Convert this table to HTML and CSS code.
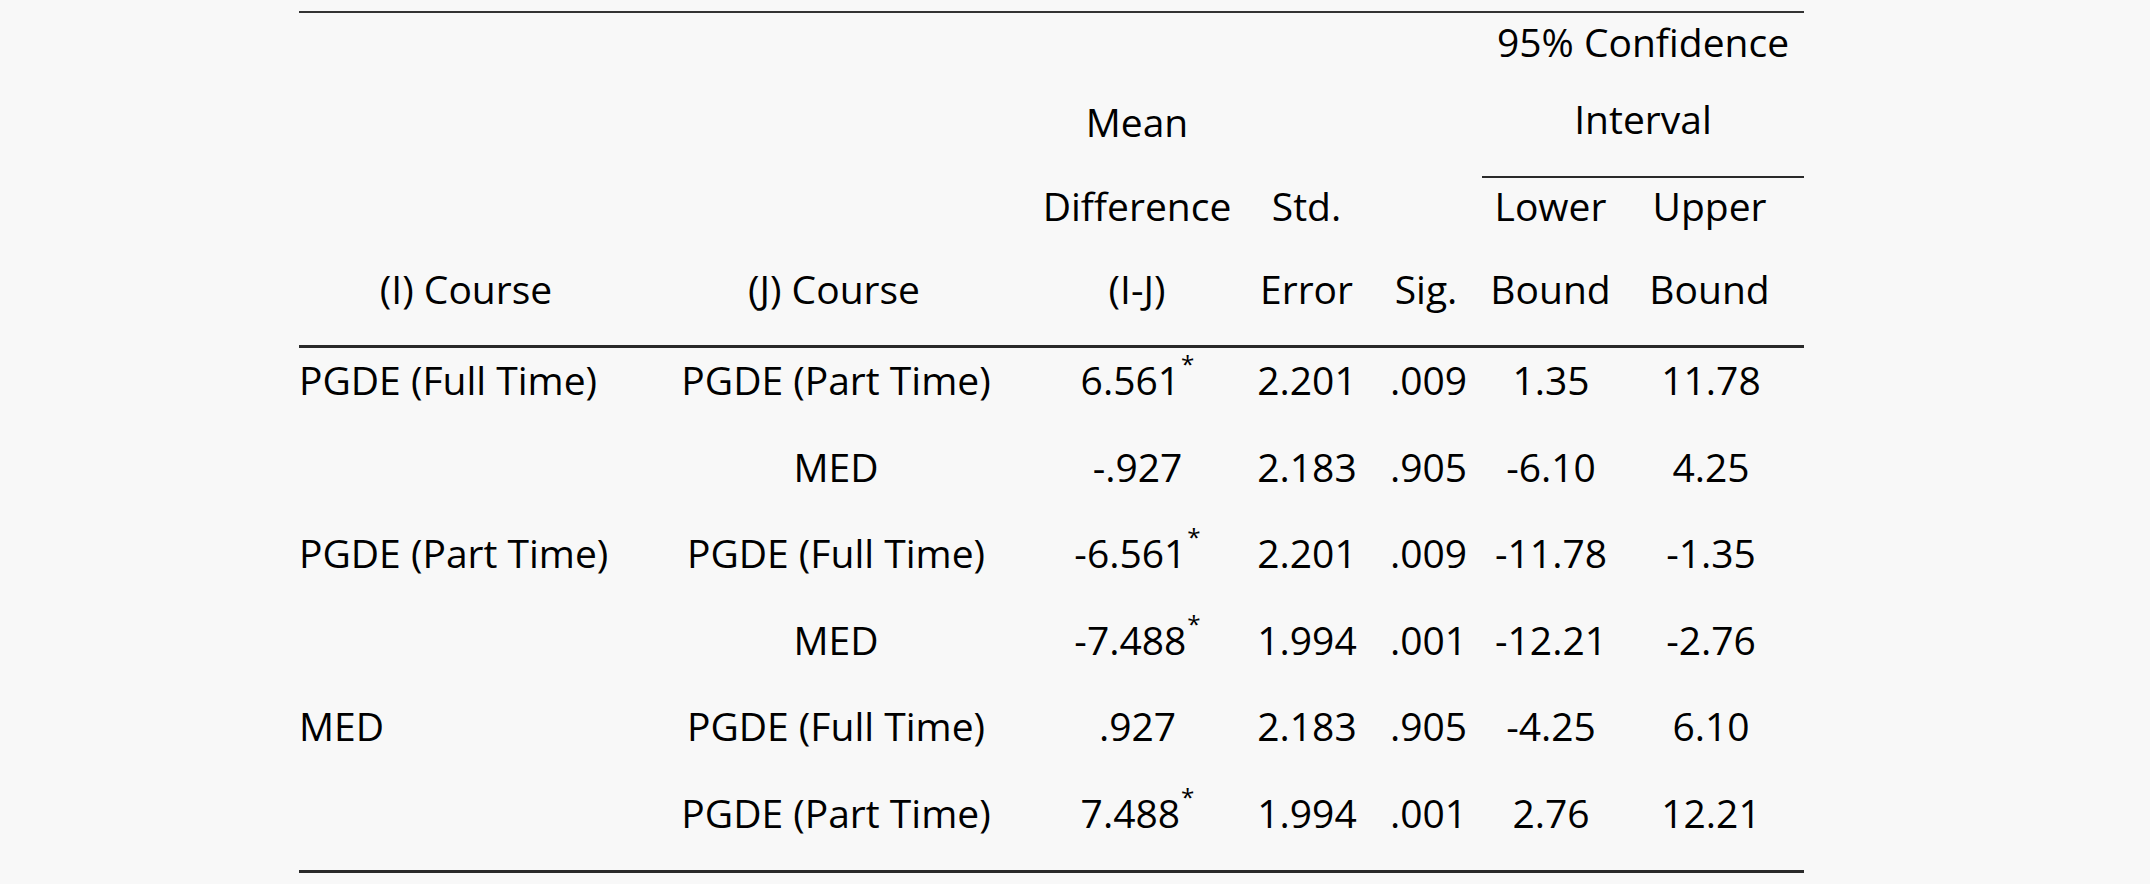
FILE: index.html
```html
<!DOCTYPE html>
<html lang="en">
<head>
<meta charset="utf-8">
<title>Multiple Comparisons</title>
<link rel="stylesheet" href="styles.css">
</head>
<body>
<div class="table">
  <div class="th c1 tall">(I) Course</div>
  <div class="th c2 tall">(J) Course</div>
  <div class="th c3 tall">Mean<br>Difference<br>(I-J)</div>
  <div class="th c4 tall">Std.<br>Error</div>
  <div class="th c5 tall">Sig.</div>
  <div class="ci">95% Confidence<br>Interval</div>
  <div class="th c6 low">Lower<br>Bound</div>
  <div class="th c7 low">Upper<br>Bound</div>

  <div class="td c1 left">PGDE (Full Time)</div>
  <div class="td c2">PGDE (Part Time)</div>
  <div class="td c3">6.561<sup>*</sup></div>
  <div class="td c4">2.201</div>
  <div class="td c5">.009</div>
  <div class="td c6">1.35</div>
  <div class="td c7">11.78</div>

  <div class="td c1 left"></div>
  <div class="td c2">MED</div>
  <div class="td c3">-.927</div>
  <div class="td c4">2.183</div>
  <div class="td c5">.905</div>
  <div class="td c6">-6.10</div>
  <div class="td c7">4.25</div>

  <div class="td c1 left">PGDE (Part Time)</div>
  <div class="td c2">PGDE (Full Time)</div>
  <div class="td c3">-6.561<sup>*</sup></div>
  <div class="td c4">2.201</div>
  <div class="td c5">.009</div>
  <div class="td c6">-11.78</div>
  <div class="td c7">-1.35</div>

  <div class="td c1 left"></div>
  <div class="td c2">MED</div>
  <div class="td c3">-7.488<sup>*</sup></div>
  <div class="td c4">1.994</div>
  <div class="td c5">.001</div>
  <div class="td c6">-12.21</div>
  <div class="td c7">-2.76</div>

  <div class="td c1 left">MED</div>
  <div class="td c2">PGDE (Full Time)</div>
  <div class="td c3">.927</div>
  <div class="td c4">2.183</div>
  <div class="td c5">.905</div>
  <div class="td c6">-4.25</div>
  <div class="td c7">6.10</div>

  <div class="td c1 left"></div>
  <div class="td c2">PGDE (Part Time)</div>
  <div class="td c3">7.488<sup>*</sup></div>
  <div class="td c4">1.994</div>
  <div class="td c5">.001</div>
  <div class="td c6">2.76</div>
  <div class="td c7">12.21</div>
</div>
</body>
</html>
```

FILE: styles.css
```css
html, body {
  margin: 0;
  padding: 0;
  background: #f8f8f8;
}

body {
  font-family: "Open Sans", Lato, sans-serif;
  font-size: 39px;
  color: #000;
}

.table {
  display: grid;
  grid-template-columns: 350px 386px 197px 143px 107px 153px 169px;
  grid-template-rows: 165px 170px repeat(6, 86.6px);
  width: 1505px;
  margin: 11px 0 0 299px;
  border-top: 2px solid #333;
  border-bottom: 3px solid #2a2a2a;
  padding-bottom: 2.4px;
}

.th {
  display: flex;
  flex-direction: column;
  justify-content: flex-end;
  text-align: center;
  line-height: 83.5px;
  padding-bottom: 14.25px;
  border-bottom: 3px solid #2a2a2a;
  white-space: nowrap;
}

.tall {
  grid-row: 1 / span 2;
}

.low {
  grid-row: 2;
}

.ci {
  grid-row: 1;
  grid-column: 6 / span 2;
  display: flex;
  flex-direction: column;
  justify-content: flex-end;
  text-align: center;
  line-height: 76.5px;
  padding-bottom: 18.75px;
  border-bottom: 2px solid #2a2a2a;
  white-space: nowrap;
}

.td {
  line-height: 64px;
  text-align: center;
  white-space: nowrap;
}

.td.left {
  text-align: left;
}

sup {
  font-size: 0.62em;
  line-height: 0;
  vertical-align: 0.9em;
  margin-left: 1px;
}

.th.c1 { padding-right: 16px; }
.th.c2 { padding-right: 16px; }
.th.c3 { padding-left: 7px; }
.th.c4 { padding-left: 6px; }
.th.c5 { padding-right: 5px; }
.th.c6 { padding-right: 16px; }
.th.c7 { padding-right: 20px; }

.td.c2 { padding-right: 12px; }
.td.c3 { padding-left: 8px; }
.td.c4 { padding-left: 7px; }
.td.c6 { padding-right: 15px; }
.td.c7 { padding-right: 17px; }
```
